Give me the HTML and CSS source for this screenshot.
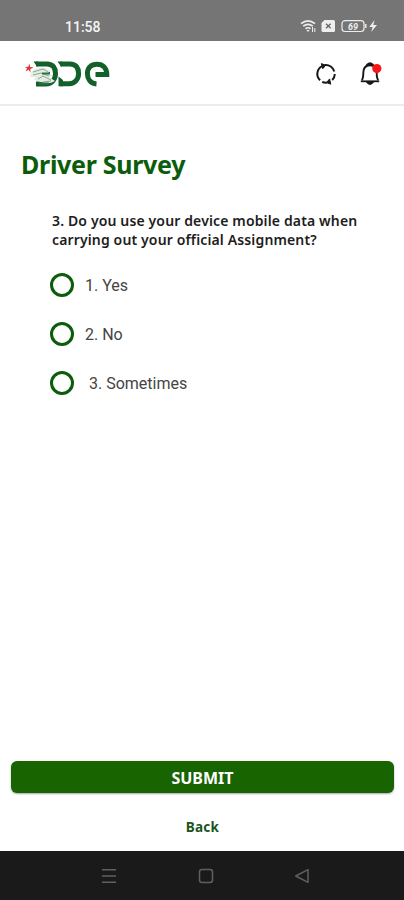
FILE: index.html
```html
<!DOCTYPE html>
<html lang="en">
<head>
    <meta charset="UTF-8">
    <meta name="viewport" content="width=device-width, initial-scale=1.0">
    <title>Driver Survey</title>
    <link rel="stylesheet" href="styles.css">
</head>
<body>
    <div class="status-bar">
        <span class="time">11:58</span>
        <svg class="status-icons" width="80" height="16" viewBox="0 0 80 16" fill="none" stroke="#eeeeee">
            <path d="M1 5.6Q8 .2 15 5.6M3.2 8.2Q8 4.5 12.8 8.2M5.5 10.7Q8 8.8 10.5 10.7" stroke-width="1.7"/>
            <path d="M6.4 12L8 14L9.6 12Z" fill="#eeeeee" stroke="none"/>
            <path d="M12.5 9v5M14.8 10v4" stroke-width="1"/>
            <path d="M24.5 2H33.5Q35 2 35 3.5V12.5Q35 14 33.5 14H23Q21.5 14 21.5 12.5V5Z" fill="#eeeeee" stroke="none"/>
            <path d="M26 5.7l4.6 4.6M30.6 5.7L26 10.3" stroke="#666666" stroke-width="1.3"/>
            <rect x="42" y="2.7" width="22" height="10.8" rx="3" stroke-width="1.2"/>
            <path d="M65.8 6v4" stroke-width="1.4"/>
            <text x="53" y="11.6" class="battery-text" text-anchor="middle">69</text>
            <path d="M74.5 2L69.3 9H72.6L71.2 14L77 7H73.4Z" fill="#eeeeee" stroke="none"/>
        </svg>
    </div>
    <header>
        <svg class="logo" width="88" height="30" viewBox="0 0 88 30" fill="none">
            <g stroke="#12602a" stroke-width="5">
                <path d="M12 5H23C29 5 31.5 9 31.5 14.5S28 25 22 25H12"/>
                <path d="M15 14.5H26" stroke-width="4"/>
                <path d="M36.5 5H46C52 5 54.6 9 54.6 14.5S51 24.8 45 24.8H36"/>
                <path d="M72.5 25C66.5 24.5 63.4 20 63.4 14.7C63.4 8.8 67 5.2 73 5.2C79 5.2 82.8 9 82.8 15.5H71.5"/>
            </g>
            <path d="M9.5 2.5H14V7.5H13ZM33.5 2.5H38V7.5H37ZM34.5 17.5L39 21V27.3H34.5Z" fill="#12602a"/>
            <path d="M11 10Q20 6 27 12L24 14L29 17L25 18L31 22Q25 26 17 23L10 21L12 18L6 18Q7 12 11 10Z" fill="#e5ece6"/>
            <path d="M9 13l10-3 5 3M9 16l8-2 8 3M14 20l5-3 8 4M19 23l8-1" stroke="#8aa990" stroke-width="1"/>
            <path d="M18 14.5h8M15 24.5h10" stroke="#2c7140" stroke-width="2"/>
            <path d="M5.4 4.5l.8 3.6 3.4.3-3.3 1.5.2 3.8-1.8-3-3.1 1.7 1.5-3.2-2.2-1.3 3.5-.2Z" fill="#df3438"/>
        </svg>
        <div class="header-icons">
            <svg width="24" height="26" viewBox="0 0 24 26" fill="none" stroke="#171717" stroke-width="2">
                <path d="M8.2 5.1A8.6 8.6 0 0 0 6.1 19.2M10.8 4.1A8.7 8.7 0 0 1 20.3 10.5M20.8 13A8.6 8.6 0 0 1 18.2 19M13.2 21.6A8.7 8.7 0 0 1 8.2 20.8"/>
                <path d="M7.4 2.6L11.6 4.3L8.8 7.7ZM16.7 23.2L12.6 21.5L15.6 17.9Z" fill="#171717" stroke-width="1"/>
            </svg>
            <svg width="24" height="26" viewBox="0 0 24 26" fill="none" stroke="#171717" stroke-width="1.9">
                <path d="M3.8 19.2C5.3 17.5 5.3 16 5.3 12C5.3 7.2 7.6 4.3 12 4.3S18.7 7.2 18.7 12C18.7 16 18.8 17.5 20.3 19.2"/>
                <path d="M2.8 20.3H21.2" stroke-width="1.8"/>
                <path d="M9.5 3.5Q12 .8 14.5 3.5Z" fill="#171717"/>
                <path d="M9 21Q12 25 15 21Z" fill="#171717"/>
                <circle cx="18.8" cy="7.6" r="4.6" fill="#f91616" stroke="none"/>
            </svg>
        </div>
    </header>
    <div class="main">
        <h1>Driver Survey</h1>
        <form class="survey">
            <p><span class="line-one">3. Do you use your device mobile data when</span><br><span class="line-two">carrying out your official Assignment?</span></p>
            <label class="option"><input type="radio" name="answer"><span>1. Yes</span></label>
            <label class="option"><input type="radio" name="answer"><span>2. No</span></label>
            <label class="option spaced"><input type="radio" name="answer"><span>3. Sometimes</span></label>
        </form>
    </div>
    <div class="actions">
        <button type="button" class="submit">SUBMIT</button>
        <a href="#" class="back">Back</a>
    </div>
    <nav>
        <svg width="16" height="16" viewBox="0 0 16 16"><path d="M1 1.7h14M1 8h14M1 14.3h14"/></svg>
        <svg width="16" height="16" viewBox="0 0 16 16"><rect x="1.5" y="1.5" width="13" height="13" rx="2.5"/></svg>
        <svg width="16" height="16" viewBox="0 0 16 16"><path d="M14 1.7V14.3L1.8 8Z" stroke-linejoin="round"/></svg>
    </nav>
</body>
</html>
```
FILE: styles.css
```css
* {
    margin: 0;
    padding: 0;
    box-sizing: border-box;
}
body {
    width: 404px;
    height: 900px;
    display: flex;
    flex-direction: column;
    overflow: hidden;
    background-color: #ffffff;
    font-family: "Noto Sans", sans-serif;
}
/* Status bar */
.status-bar {
    height: 41px;
    flex: none;
    display: flex;
    justify-content: space-between;
    padding: 18px 24px 0 65px;
    background-color: #757575;
}
.time {
    color: #f5f5f5;
    font: 500 14px/18px Roboto, sans-serif;
}
.battery-text {
    fill: #eeeeee;
    stroke: none;
    font: italic bold 9px Roboto, sans-serif;
}
/* Header */
header {
    height: 65px;
    flex: none;
    display: flex;
    justify-content: space-between;
    align-items: center;
    padding: 2px 22px 0 24px;
    border-bottom: 2px solid #ececec;
}
.header-icons {
    display: flex;
    gap: 20px;
}
/* Survey */
.main {
    flex: 1;
    padding: 41px 20px 0 21px;
}
h1 {
    color: #0b5c0b;
    font-size: 25px;
    line-height: 34px;
    font-weight: 700;
    letter-spacing: -0.3px;
}
.survey {
    padding: 30px 0 0 29px;
}
.survey p {
    color: #1d1d1d;
    font-size: 14px;
    line-height: 19px;
    font-weight: 600;
    margin: 0 0 11px 2px;
    white-space: nowrap;
    letter-spacing: 0.14px;
}
.option {
    height: 49px;
    display: flex;
    align-items: center;
    gap: 11px;
    color: #444444;
    font: 16px/20px Roboto, sans-serif;
}
.option span {
    padding-top: 2px;
}
.option input {
    appearance: none;
    width: 24px;
    height: 24px;
    border: 3px solid #0b5c0b;
    border-radius: 50%;
}
.spaced {
    gap: 15px;
}
/* Buttons */
.actions {
    height: 90px;
    flex: none;
    display: flex;
    flex-direction: column;
    align-items: center;
    padding: 0 10px 0 11px;
}
.submit {
    width: 100%;
    height: 32px;
    padding-top: 1px;
    border: none;
    border-radius: 6px;
    background-color: #176400;
    box-shadow: 0 1px 2px rgba(0, 0, 0, 0.35);
    color: #ffffff;
    font: bold 16px/32px "Noto Sans", sans-serif;
}
.back {
    margin-top: 25px;
    color: #1c5421;
    font-size: 13.5px;
    line-height: 19px;
    font-weight: 700;
    letter-spacing: 0.3px;
    text-decoration: none;
}
/* System navigation */
nav {
    height: 49px;
    flex: none;
    display: flex;
    justify-content: space-between;
    align-items: center;
    padding: 0 94px 0 101px;
    background-color: #1a1a1a;
}
nav svg {
    fill: none;
    stroke: #606060;
    stroke-width: 1.5;
}
```
